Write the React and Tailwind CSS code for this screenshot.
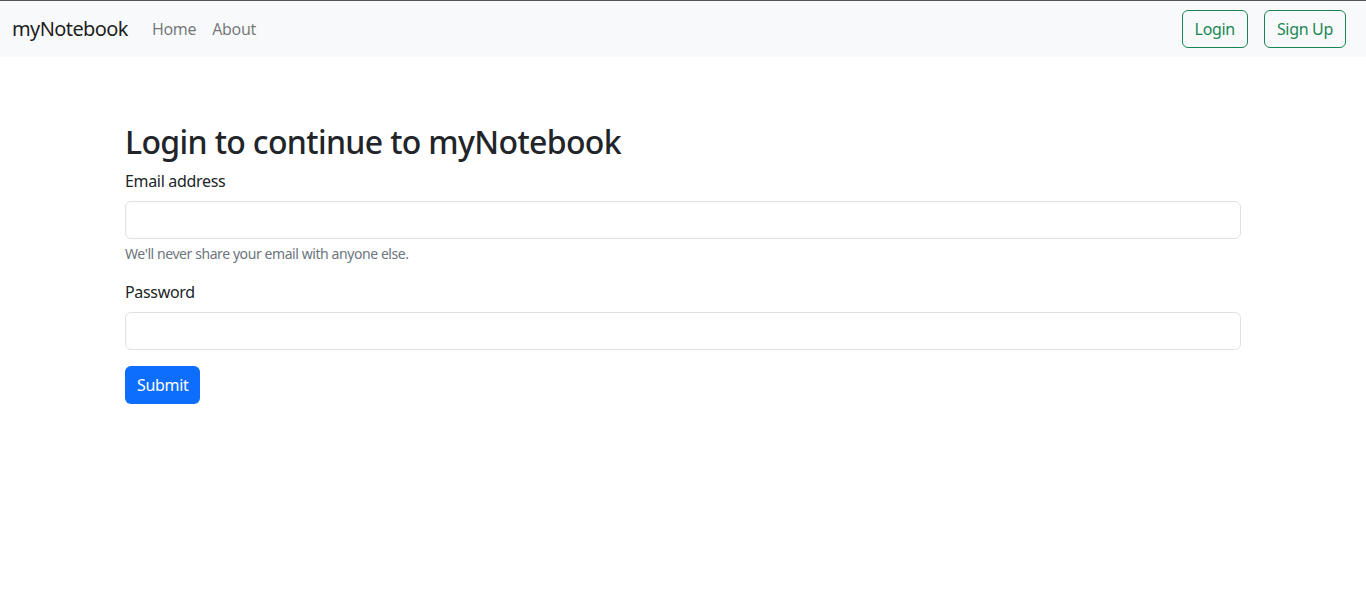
import React, { useState } from "react";

const App = () => {
  const [email, setEmail] = useState("");
  const [password, setPassword] = useState("");

  return (
    <div className="min-h-screen bg-white font-['Noto_Sans',sans-serif] tracking-[-0.02em] text-[#212529]">
      {/* Navbar */}
      <nav className="border-t border-[#555] bg-[#f8f9fa] h-[57px] px-3 flex items-center justify-between">
        <div className="flex items-center">
          <a href="#" className="text-[20px] tracking-[-0.03em] text-black/90 mr-4">
            myNotebook
          </a>
          <a href="#" className="px-2 text-base text-black/55">
            Home
          </a>
          <a href="#" className="px-2 text-base text-black/55">
            About
          </a>
        </div>
        <div className="flex items-center">
          <button className="mx-2 h-[38px] px-3 text-base text-[#198754] border border-[#198754] rounded-md">
            Login
          </button>
          <button className="mx-2 h-[38px] px-3 text-base text-[#198754] border border-[#198754] rounded-md">
            Sign Up
          </button>
        </div>
      </nav>

      {/* Form */}
      <div className="max-w-[1140px] mx-auto px-3 mt-[66px]">
        <h2 className="text-[32px] font-medium leading-[1.2] tracking-[-0.02em] mb-2 pt-[2px] -mt-[2px]">
          Login to continue to myNotebook
        </h2>
        <form onSubmit={(e) => e.preventDefault()}>
          <div className="mb-4">
            <label htmlFor="email" className="block mb-2 text-base leading-6">
              Email address
            </label>
            <input
              id="email"
              type="email"
              value={email}
              onChange={(e) => setEmail(e.target.value)}
              className="block w-full h-[38px] px-3 border border-[#dee2e6] rounded-md outline-none"
            />
            <div className="mt-1 text-[14px] leading-[21px] tracking-[-0.03em] text-[#6c757d]">
              We'll never share your email with anyone else.
            </div>
          </div>
          <div className="mb-4">
            <label htmlFor="password" className="block mb-2 text-base leading-6">
              Password
            </label>
            <input
              id="password"
              type="password"
              value={password}
              onChange={(e) => setPassword(e.target.value)}
              className="block w-full h-[38px] px-3 border border-[#dee2e6] rounded-md outline-none"
            />
          </div>
          <button
            type="submit"
            className="h-[38px] px-3 bg-[#0d6efd] text-white text-base rounded-md"
          >
            Submit
          </button>
        </form>
      </div>
    </div>
  );
};

export default App;
